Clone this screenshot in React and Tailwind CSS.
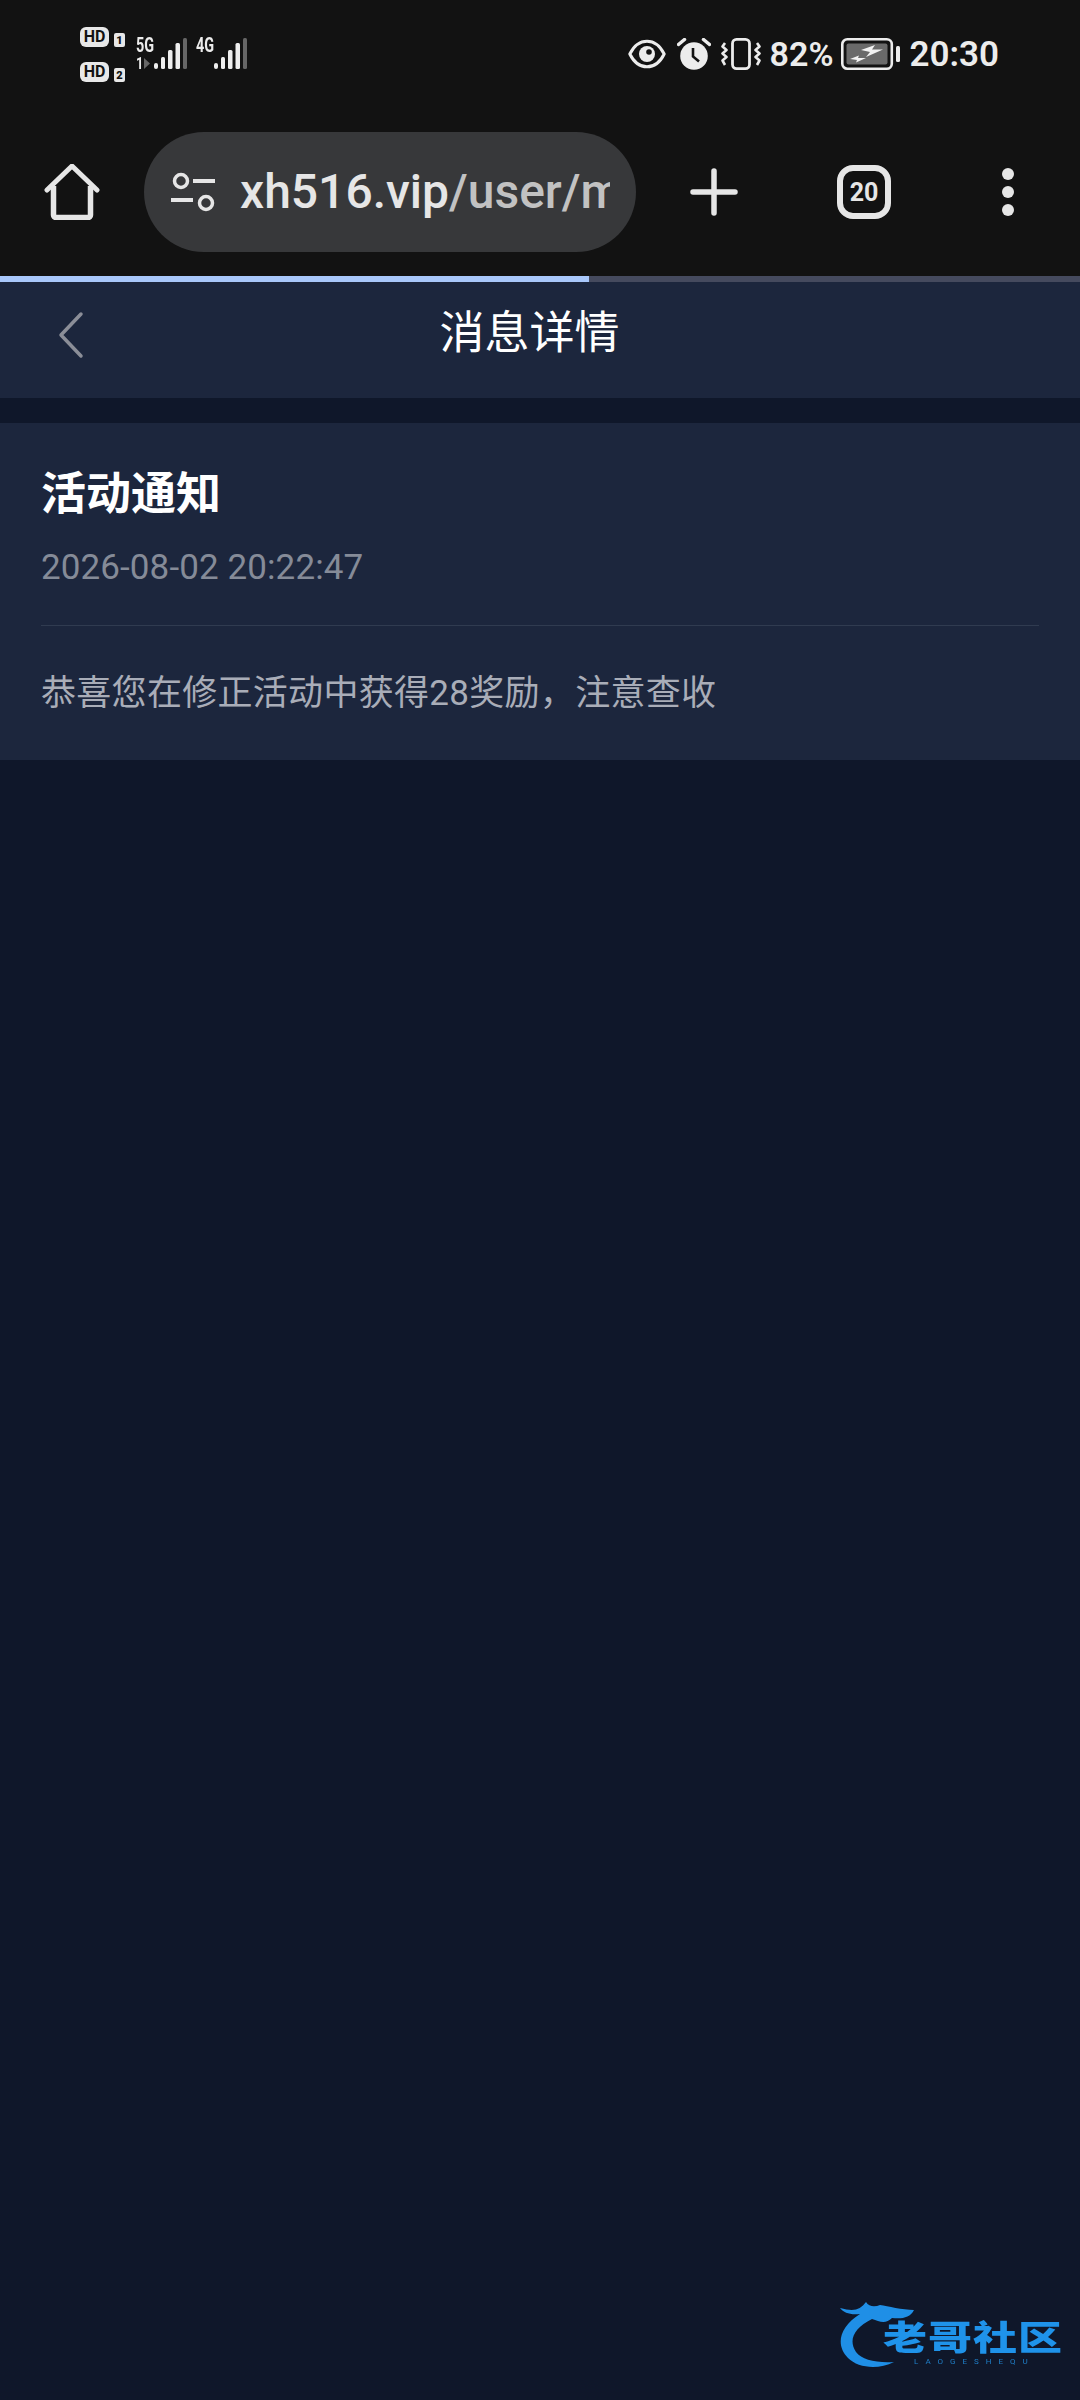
const font = { fontFamily: '"Roboto", "Noto Sans CJK SC", sans-serif' }

const Bars = ({ className = "" }) => (
  <svg width="34" height="32" viewBox="0 0 34 32" className={className}>
    <rect x="0" y="25" width="4" height="6" rx="2" fill="#eee" />
    <rect x="7" y="19" width="4" height="12" rx="1.5" fill="#eee" />
    <rect x="14" y="12" width="4.5" height="19" rx="1.5" fill="#eee" />
    <rect x="21.5" y="5" width="4.5" height="26" rx="1.5" fill="#eee" />
    <rect x="29" y="0" width="4" height="31" rx="1.5" fill="#666" />
  </svg>
)

const HdBadge = ({ n }) => (
  <div className="flex items-end gap-[5px]">
    <div className="w-[29px] h-[20px] rounded-[6px] bg-[#e8e8e8] text-[#121212] flex items-center justify-center text-[16px] leading-none font-bold">
      HD
    </div>
    <div className="w-[11px] h-[14px] rounded-[2px] bg-[#e8e8e8] text-[#121212] flex items-center justify-center text-[11px] leading-none font-black">
      {n}
    </div>
  </div>
)

const StatusBar = () => (
  <div className="h-[108px] flex items-center text-[#ececec]">
    {/* left: sim + signal */}
    <div className="ml-[80px] flex flex-col gap-[15px] mt-[1px]">
      <HdBadge n="1" />
      <HdBadge n="2" />
    </div>
    <div className="ml-[11px] flex items-end mb-[1px]">
      <div className="w-[18px] h-[32px] flex flex-col justify-between">
        <div className="text-[20px] leading-[15px] font-bold origin-left scale-x-[.72] whitespace-nowrap">5G</div>
        <div className="flex items-center h-[12px]">
          <span className="text-[16px] leading-none font-bold origin-left scale-x-[.8] w-[8px]">1</span>
          <svg width="7" height="11" viewBox="0 0 7 11"><path d="M0 0l6 5.5L0 11z" fill="#666" /></svg>
        </div>
      </div>
      <Bars />
    </div>
    <div className="ml-[8px] flex items-end mb-[1px]">
      <div className="w-[18px] h-[32px]">
        <div className="text-[20px] leading-[15px] font-bold origin-left scale-x-[.72] whitespace-nowrap">4G</div>
      </div>
      <Bars />
    </div>

    {/* right: status icons */}
    <div className="ml-auto mr-[81px] flex items-center">
      <svg width="38" height="30" viewBox="0 0 38 30" fill="none">
        <path d="M1.800 15C6 6.500 12 2.200 19 2.200S32 6.500 36.200 15C32 23.500 26 27.800 19 27.800S6 23.500 1.800 15z" stroke="#ececec" strokeWidth="3" strokeLinejoin="round" />
        <circle cx="19" cy="15" r="8" fill="#ececec" />
        <circle cx="21" cy="13" r="2.800" fill="#121212" />
      </svg>
      <svg width="34" height="32" viewBox="0 0 34 32" className="ml-[11px]">
        <circle cx="17" cy="18" r="13.800" fill="#ececec" />
        <path d="M16 10v8.500l6 5" stroke="#121212" strokeWidth="2.600" fill="none" />
        <path d="M7.500 1.500L1.500 6.500M26.500 1.500l6 5" stroke="#ececec" strokeWidth="3.500" strokeLinecap="round" />
      </svg>
      <svg width="40" height="32" viewBox="0 0 40 32" fill="none" className="ml-[10px]">
        <rect x="11.500" y="1.400" width="17" height="29.200" rx="4" stroke="#ececec" strokeWidth="2.800" />
        <path d="M4 5L1.500 8.500 5.500 12l-4 3.500 4 3.500-4 3.500L4 27" stroke="#ececec" strokeWidth="2.600" strokeLinejoin="round" />
        <path d="M36 5l2.500 3.500-4 3.500 4 3.500-4 3.500 4 3.500L36 27" stroke="#ececec" strokeWidth="2.600" strokeLinejoin="round" />
      </svg>
      <span className="ml-[9px] text-[34px] leading-none font-semibold">82%</span>
      <svg width="59" height="32" viewBox="0 0 59 32" fill="none" className="ml-[8px]">
        <rect x="1.300" y="1.300" width="49.500" height="29.400" rx="5" stroke="#ececec" strokeWidth="2.600" />
        <rect x="5.500" y="5.500" width="41" height="21" rx="2" fill="#6a6a6a" />
        <path d="M20 12l14-5-3 4.500h11l-17 7.500 4-5z" fill="#f2f2f2" />
        <path d="M9 21l9-3.500-1 2.500h8l-10 4.500 1-2.500z" fill="#f2f2f2" />
        <rect x="55" y="8" width="4" height="16" rx="1.500" fill="#ececec" />
      </svg>
      <span className="ml-[9px] text-[35px] leading-none font-semibold">20:30</span>
    </div>
  </div>
)

const Toolbar = () => (
  <div className="h-[168px] flex items-center text-[#e6e6e6]">
    <svg width="56" height="56" viewBox="0 0 56 56" fill="none" className="ml-[44px]">
      <path d="M3 26L28 2l25 24" stroke="#e6e6e6" strokeWidth="5" strokeLinecap="round" strokeLinejoin="round" />
      <path d="M9.500 22v29a2.500 2.500 0 0 0 2.500 2.500h32a2.500 2.500 0 0 0 2.500-2.500V22" stroke="#e6e6e6" strokeWidth="5.500" />
    </svg>
    <div className="ml-[44px] w-[492px] h-[120px] rounded-full bg-[#37383a] flex items-center pl-[26px]">
      <svg width="46" height="40" viewBox="0 0 46 40" fill="none" className="shrink-0">
        <circle cx="11" cy="9" r="6.500" stroke="#e6e6e6" strokeWidth="3.500" />
        <path d="M23 9h22M1 28h22" stroke="#e6e6e6" strokeWidth="4" />
        <circle cx="36" cy="31" r="6.500" stroke="#e6e6e6" strokeWidth="3.500" />
      </svg>
      <div className="ml-[24px] w-[370px] overflow-hidden whitespace-nowrap text-[48px] leading-[56px] font-medium">
        xh516.vip<span className="text-[#c2c2c2]">/user/message</span>
      </div>
    </div>
    <svg width="48" height="48" viewBox="0 0 48 48" className="ml-[54px]">
      <path d="M24 3v42M3 24h42" stroke="#e6e6e6" strokeWidth="5.500" strokeLinecap="round" />
    </svg>
    <div className="ml-[99px] w-[54px] h-[54px] rounded-[16px] border-[6px] border-[#e6e6e6] flex items-center justify-center text-[25px] leading-none font-bold">
      20
    </div>
    <div className="ml-[111px] flex flex-col gap-[6px]">
      <div className="w-[12px] h-[12px] rounded-full bg-[#e6e6e6]" />
      <div className="w-[12px] h-[12px] rounded-full bg-[#e6e6e6]" />
      <div className="w-[12px] h-[12px] rounded-full bg-[#e6e6e6]" />
    </div>
  </div>
)

const Watermark = () => (
  <div className="absolute left-[836px] top-[2298px] w-[230px] h-[72px] blur-[0.7px]">
    <svg width="100" height="72" viewBox="0 0 100 72" className="absolute left-0 top-0">
      <path d="M4 10c14 4 20 2 26-6 3 5 9 5 14 3 8 1 22 5 34 5-4 8-12 9-22 8-6 6-12 4-20 1C18 30 12 42 20 54c6 8 20 11 38 10-16 8-36 6-46-4C0 48 2 30 24 16 14 17 8 15 4 10z" fill="#1f8fe6" />
    </svg>
    <div className="absolute left-[47px] top-[16px] text-[44px] leading-[48px] font-black tracking-[1px] text-[#1f93ea] whitespace-nowrap scale-y-[.78]">
      老哥社区
    </div>
    <div className="absolute left-[78px] top-[60px] text-[8px] leading-[8px] tracking-[7px] text-[#1f7fc8] whitespace-nowrap">
      LAOGESHEQU
    </div>
  </div>
)

const App = () => {
  return (
    <div className="relative h-[2400px] overflow-hidden bg-[#0f172a]" style={font}>
      <div className="bg-[#121212]">
        <StatusBar />
        <Toolbar />
      </div>

      {/* page load progress */}
      <div className="h-[6px] bg-[#454a5e]">
        <div className="w-[589px] h-full bg-[#a8c7fa]" />
      </div>

      {/* nav */}
      <div className="relative h-[116px] bg-[#1c263d] flex justify-center pt-[22px]">
        <svg width="26" height="48" viewBox="0 0 26 48" fill="none" className="absolute left-[58px] top-[29px]">
          <path d="M23 3L3 24l20 21" stroke="#8b8e98" strokeWidth="3.500" strokeLinecap="round" strokeLinejoin="round" />
        </svg>
        <h1 className="ml-[-21px] text-[45px] leading-[60px] text-white">消息详情</h1>
      </div>

      {/* message */}
      <div className="mt-[25px] h-[337px] bg-[#1c263d] px-[41px] pt-[42px]">
        <h2 className="text-[45px] leading-[60px] font-bold text-white">活动通知</h2>
        <div className="mt-[17px] text-[35px] leading-[52px] tracking-[.1px] text-[#858b98]">2026-08-02 20:22:47</div>
        <div className="mt-[31px] h-px bg-[#303b50]" />
        <p className="mt-[42px] text-[35px] leading-[52px] tracking-[.3px] text-[#a9adb8]">恭喜您在修正活动中获得28奖励{"\uFF0C"}注意查收</p>
      </div>

      <Watermark />
    </div>
  )
}

export default App
